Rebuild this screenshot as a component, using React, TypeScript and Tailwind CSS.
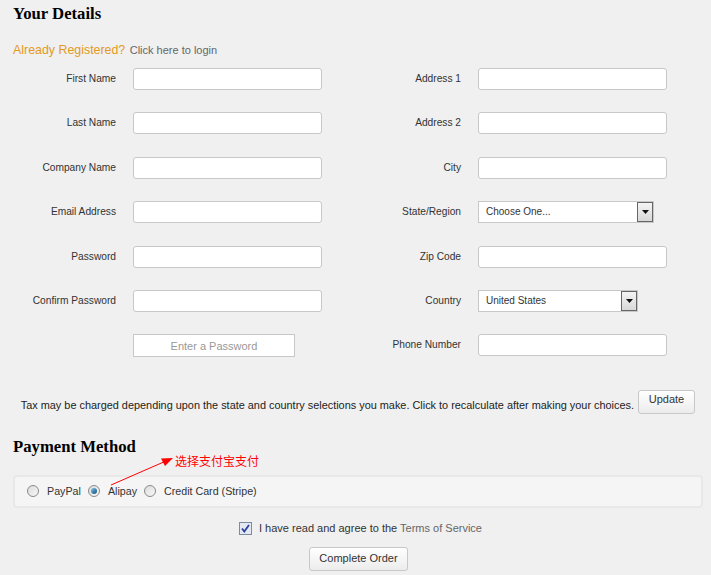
import React from 'react';

const leftFields = ['First Name', 'Last Name', 'Company Name', 'Email Address', 'Password', 'Confirm Password'];

function Field({ label, children }: { label: string; children: React.ReactNode }) {
  return (
    <div className="flex h-[44.4px] items-start">
      <div className="w-[117px] pr-px pt-[5px] text-right text-[10.2px] leading-[12px] text-[#333]">{label}</div>
      <div className="ml-[16px]">{children}</div>
    </div>
  );
}

function TextBox() {
  return <div className="h-[22px] w-[189px] rounded-[3px] border border-[#c8c8c8] bg-white" />;
}

function Select({ value, width }: { value: string; width: string }) {
  return (
    <div className={`flex h-[22px] items-stretch border border-[#c8c8c8] bg-white ${width}`}>
      <div className="flex-1 pl-[7px] pt-[4px] text-[10px] leading-[12px] text-[#333]">{value}</div>
      <div className="flex w-[16px] items-center justify-center border border-[#666] bg-gradient-to-b from-[#f4f4f4] to-[#d8d8d8]">
        <svg width="7" height="4" viewBox="0 0 7 4">
          <path d="M0 0h7L3.5 4z" fill="#111" />
        </svg>
      </div>
    </div>
  );
}

function Radio({ checked }: { checked?: boolean }) {
  return (
    <span className="flex h-[12px] w-[12px] items-center justify-center rounded-full border border-[#8a8a8a] bg-gradient-to-br from-[#dcdcdc] to-[#f8f8f8]">
      {checked && <span className="h-[6px] w-[6px] rounded-full bg-gradient-to-br from-[#7fc4e8] to-[#0b4f7c]" />}
    </span>
  );
}

export default function App() {
  return (
    <div className="h-[575px] w-[711px] overflow-hidden bg-[#f0f0f0] px-[13px] font-['Liberation_Sans',Arial,sans-serif]">
      <h2 className="pt-[4px] font-['Liberation_Serif',serif] text-[16.7px] font-bold leading-[20px] text-black">Your Details</h2>

      <p className="mt-[18px] leading-[14px]">
        <span className="text-[12.4px] text-[#e39a1c]">Already Registered?</span>{' '}
        <span className="text-[11px] text-[#666]">Click here to login</span>
      </p>

      {/* form columns */}
      <div className="-ml-[13px] mt-[11px] flex">
        <div className="w-[345px]">
          {leftFields.map((f) => (
            <Field key={f} label={f}>
              <TextBox />
            </Field>
          ))}
          <div className="flex h-[44.4px] items-start">
            <div className="ml-[133px] flex h-[23px] w-[162px] items-center justify-center border border-[#c8c8c8] bg-white text-[11px] text-[#999]">
              Enter a Password
            </div>
          </div>
        </div>
        <div>
          <Field label="Address 1"><TextBox /></Field>
          <Field label="Address 2"><TextBox /></Field>
          <Field label="City"><TextBox /></Field>
          <Field label="State/Region"><Select value="Choose One..." width="w-[176px]" /></Field>
          <Field label="Zip Code"><TextBox /></Field>
          <Field label="Country"><Select value="United States" width="w-[160px]" /></Field>
          <Field label="Phone Number"><TextBox /></Field>
        </div>
      </div>

      <div className="mt-[11px] flex items-start justify-end gap-[4px] pr-[3px]">
        <p className="pt-[9px] text-[10.9px] leading-[12px] text-[#222]">
          Tax may be charged depending upon the state and country selections you make. Click to recalculate after making your choices.
        </p>
        <button className="h-[24px] w-[57px] rounded-[3px] border border-[#c8c8c8] bg-gradient-to-b from-white to-[#ececec] pb-[4px] text-[11px] text-[#333]">
          Update
        </button>
      </div>

      <div className="relative mt-[23px]">
        <h2 className="font-['Liberation_Serif',serif] text-[16.7px] font-bold leading-[20px] text-black">Payment Method</h2>
        <svg className="absolute left-[-13px] top-0" width="200" height="60" viewBox="0 0 200 60">
          <line x1="111" y1="48" x2="166" y2="24" stroke="#f00" strokeWidth="1" />
          <path d="M173 21L161 21.5L165 29z" fill="#f00" />
        </svg>
        <span className="absolute left-[162px] top-[16px] font-['Noto_Sans_CJK_SC',sans-serif] text-[12px] leading-[16px] text-[#f00]">
          选择支付宝支付
        </span>

        <div className="mt-[18px] flex h-[33px] w-[690px] items-center gap-[7px] rounded-[4px] border-2 border-[#e8e8e8] bg-[#f5f5f5] pl-[12px] text-[10.7px] text-[#333]">
          <Radio />
          <span className="ml-px">PayPal</span>
          <Radio checked />
          <span className="ml-px">Alipay</span>
          <Radio />
          <span className="ml-px">Credit Card (Stripe)</span>
        </div>
      </div>

      <div className="mt-[14px] flex h-[14px] items-center justify-center gap-[7px] pl-[10px]">
        <svg width="13" height="13" viewBox="0 0 13 13">
          <rect x="0.5" y="0.5" width="12" height="12" fill="#e4e8f0" stroke="#7a8aa0" />
          <path d="M3 6.5L5.3 9.5L10 3" stroke="#2a3f9e" strokeWidth="1.8" fill="none" />
        </svg>
        <span className="text-[11px] text-[#333]">
          I have read and agree to the <span className="text-[#666]">Terms of Service</span>
        </span>
      </div>

      <div className="mt-[11px] flex justify-center pl-[6px]">
        <button className="h-[24px] w-[99px] rounded-[3px] border border-[#c8c8c8] bg-gradient-to-b from-white to-[#ececec] text-[11px] text-[#333]">
          Complete Order
        </button>
      </div>
    </div>
  );
}
